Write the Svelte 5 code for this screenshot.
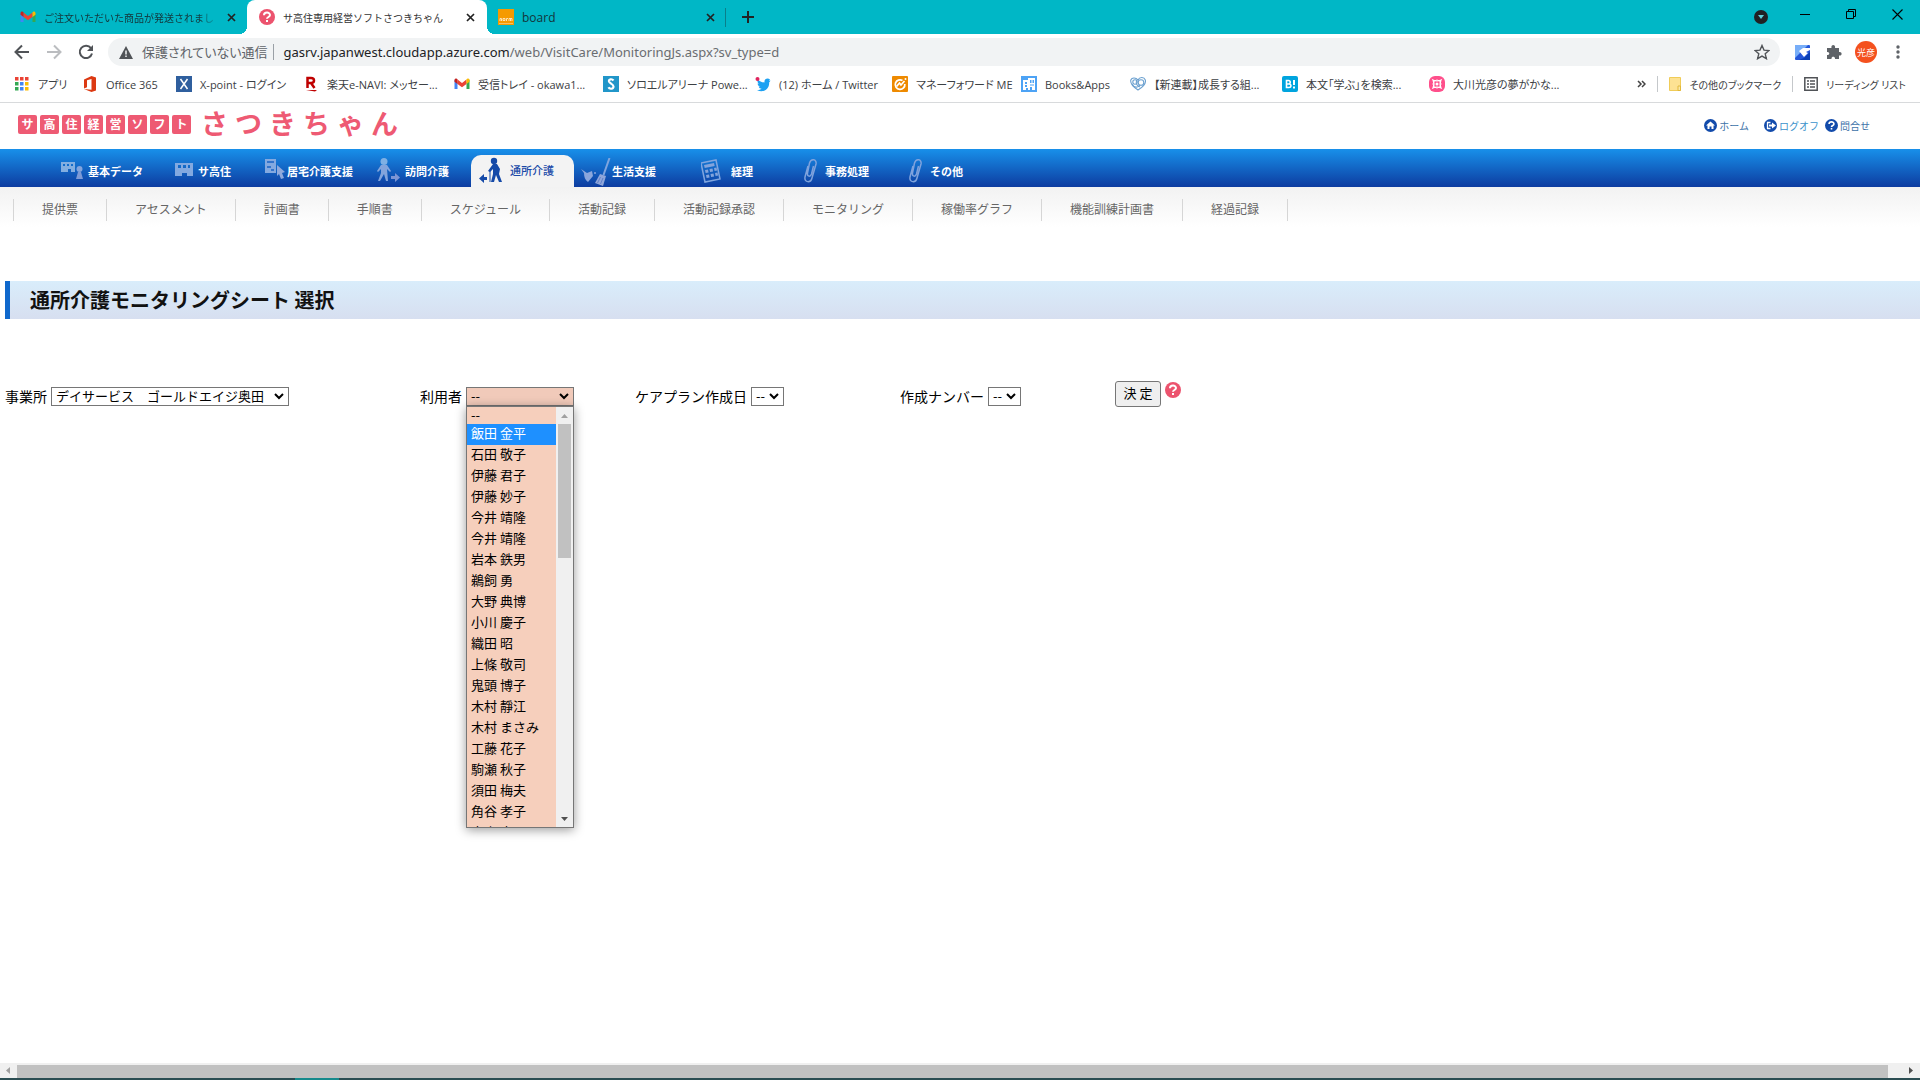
<script>
  const bookmarks = [
    { icon: 'apps', text: 'アプリ', w: 68 },
    { icon: 'office', text: 'Office 365', w: 94 },
    { icon: 'xpoint', text: 'X-point - ログイン', w: 127 },
    { icon: 'rakuten', text: '楽天e-NAVI: メッセー...', w: 151 },
    { icon: 'gmail', text: '受信トレイ - okawa1...', w: 149 },
    { icon: 'solo', text: 'ソロエルアリーナ Powe...', w: 152 },
    { icon: 'twitter', text: '(12) ホーム / Twitter', w: 137 },
    { icon: 'mf', text: 'マネーフォワード ME', w: 129 },
    { icon: 'books', text: 'Books&Apps', w: 109 },
    { icon: 'hearts', text: '【新連載】成長する組...', w: 152 },
    { icon: 'hatena', text: '本文「学ぶ」を検索...', w: 147 },
    { icon: 'pink', text: '大川光彦の夢がかな...', w: 150 }
  ];

  const nav = [
    { icon: 'data', text: '基本データ', w: 114, iw: 27 },
    { icon: 'building', text: 'サ高住', w: 90, iw: 23 },
    { icon: 'home', text: '居宅介護支援', w: 112, iw: 22 },
    { icon: 'visit', text: '訪問介護', w: 94, iw: 28 },
    { icon: 'day', text: '通所介護', w: 103, iw: 31, active: true },
    { icon: 'clean', text: '生活支援', w: 127, iw: 38 },
    { icon: 'calc', text: '経理', w: 103, iw: 30 },
    { icon: 'clip', text: '事務処理', w: 105, iw: 21 },
    { icon: 'clip', text: 'その他', w: 90, iw: 21 }
  ];

  const subnav = ['提供票', 'アセスメント', '計画書', '手順書', 'スケジュール', '活動記録', '活動記録承認', 'モニタリング', '稼働率グラフ', '機能訓練計画書', '経過記録'];

  const users = ['飯田 金平', '石田 敬子', '伊藤 君子', '伊藤 妙子', '今井 靖隆', '今井 靖隆', '岩本 鉄男', '鵜飼 勇', '大野 典博', '小川 慶子', '織田 昭', '上條 敬司', '鬼頭 博子', '木村 靜江', '木村 まさみ', '工藤 花子', '駒瀬 秋子', '須田 梅夫', '角谷 孝子', '高木 幸子'];

  let selected = $state('飯田 金平');
</script>

{#snippet gmail()}
  <svg width="16" height="16" viewBox="0 0 16 16" aria-hidden="true">
    <path d="M.5 3.500V13h3V6z" fill="#4285f4" />
    <path d="M15.500 3.500V13h-3V6z" fill="#34a853" />
    <path d="M3.500 3.600v4.400L8 11.200l4.500-3.200V3.600L8 7z" fill="#ea4335" />
    <path d="M.5 4.500C.5 2.500 2.500 2 3.500 3.200V8L.5 5.800z" fill="#c5221f" />
    <path d="M15.500 4.500c0-2-2-2.500-3-1.300V8l3-2.200z" fill="#fbbc04" />
  </svg>
{/snippet}

{#snippet question(size, color)}
  <svg width={size} height={size} viewBox="0 0 16 16" aria-hidden="true">
    <circle cx="8" cy="8" r="8" fill={color} />
    <path d="M5 6.200C5 2.700 11 2.700 11 6.100 11 8 8 8 8 9.800" fill="none" stroke="#fff" stroke-width="2" />
    <rect x="7" y="11" width="2" height="2" fill="#fff" />
  </svg>
{/snippet}

{#snippet cross()}
  <svg width="9" height="9" viewBox="0 0 9 9" aria-hidden="true"><path d="M1 1l7 7M8 1L1 8" stroke="#222" stroke-width="1.700" /></svg>
{/snippet}

{#snippet norma()}
  <svg width="16" height="16" viewBox="0 0 16 16" aria-hidden="true">
    <rect width="16" height="16" fill="#f59a00" />
    <path d="M2 12V9.500h1.500V12M5 9.500h2v2H5zM8.500 12V9.500H10M11 12V9.500h3V12M12.500 9.500V12" fill="none" stroke="#fde3b8" />
    <path d="M1 14.500h14" stroke="#fbd08a" stroke-width=".7" />
  </svg>
{/snippet}

{#snippet bmIcon(name)}
  {#if name === 'gmail'}
    {@render gmail()}
  {:else}
    <svg width="16" height="16" viewBox="0 0 16 16" aria-hidden="true">
      {#if name === 'apps'}
        {#each ['#ea4335', '#ea4335', '#ea4335', '#34a853', '#4285f4', '#fbbc04', '#34a853', '#4285f4', '#fbbc04'] as c, i}
          <rect x={1 + (i % 3) * 5} y={1 + Math.floor(i / 3) * 5} width="3.500" height="3.500" fill={c} />
        {/each}
      {:else if name === 'office'}
        <path d="M2 3.500L9.500 0 14 1.500v13L9.500 16 2 13l7.500.8V3L5 4.200v7L2 12.600z" fill="#dc3912" />
      {:else if name === 'xpoint'}
        <rect width="16" height="16" fill="#2f5f9e" />
        <path d="M4.500 3l7 10M11.500 3l-7 10" stroke="#fff" stroke-width="1.500" />
      {:else if name === 'rakuten'}
        <path d="M4.500 12V2H8c4 0 4 5 0 5H5M8 7l3.500 5" fill="none" stroke="#bf0000" stroke-width="2.500" />
        <path d="M3 14h11l-2 1.500z" fill="#bf0000" />
      {:else if name === 'solo'}
        <rect width="16" height="16" fill="#2196c9" />
        <path d="M10.500 4.500C9 2.500 5.500 3 6 5.500c.5 2 4.500 2.500 4.500 5 0 2.700-4 3-5 .8" fill="none" stroke="#fff" stroke-width="2.200" />
      {:else if name === 'twitter'}
        <path d="M15.500 4.500c-.5.300-1 .4-1.600.5.5-.4.900-.9 1.100-1.500-2.500-2-6-.5-5.500 3C6.800 6.400 4.500 5.300 3 3.500 1.900 5.400 2.700 7.100 4 8c-.5 0-1-.2-1.400-.4 0 1.500 1 2.800 2.500 3.200H3.700c.4 1.200 1.500 2 2.900 2-1.300 1-2.900 1.400-4.600 1.300 6 3.300 12.500-.5 12.200-7.900.5-.5 1-1 1.300-1.700z" fill="#1da1f2" />
        <circle cx="2.500" cy="3" r="2" fill="#e0245e" />
      {:else if name === 'mf'}
        <rect width="16" height="16" rx="1" fill="#ee8a00" />
        <path d="M10.500 4.500A4.800 4.800 0 1 0 12.800 8" fill="none" stroke="#fff" stroke-width="1.700" />
        <path d="M4.500 10.500l3-3.500 1.500 2 3.500-4" fill="none" stroke="#fff" stroke-width="1.700" />
        <circle cx="13.500" cy="3" r="1" fill="#fff" />
      {:else if name === 'books'}
        <path d="M0 0h16v16H0z" fill="#4da3f5" />
        <path d="M2 14V4h5V2h7v12h-3v-3H9v3H7v-2H5v2z" fill="#fff" />
        <path d="M4 6h2v2H4zM4 9h2v2H4zM9 4h1.500v3H9zM11.500 4H13v3h-1.500zM9 8.500h4v1H9z" fill="#4da3f5" />
      {:else if name === 'hearts'}
        <g fill="none" stroke="#6ba0cf" stroke-width="1.100">
          <path d="M8 14C3 11 0 8 .8 4 2 1 6 1.500 8 4c1.500-3 6-3.500 7.300 0 1 4-2 7-7.300 10z" />
          <circle cx="5" cy="6" r="2.200" /><circle cx="11" cy="6.500" r="2.800" /><path d="M2 8c2 4 6 4 8 1M7 4c-2 3 0 6 3 7" />
        </g>
      {:else if name === 'hatena'}
        <rect width="16" height="16" rx="2" fill="#00a4de" />
        <path d="M4.500 4.500v7h2.300c2.800 0 2.800-3.500.2-3.500H4.500h2c2.300 0 2.300-3.500 0-3.500z" fill="none" stroke="#fff" stroke-width="1.600" />
        <path d="M12 4v5M12 10.500v2" stroke="#fff" stroke-width="2" />
      {:else if name === 'pink'}
        <rect width="16" height="16" rx="6" fill="#ff4f8b" />
        <path d="M4 4q4 2 8 0-2 4 0 8-4-2-8 0 2-4 0-8z" fill="none" stroke="#fff" stroke-width="1.200" />
        <circle cx="8" cy="8" r="4" fill="none" stroke="#fff" />
        <circle cx="8" cy="8" r="1.500" fill="#fff" />
      {/if}
    </svg>
  {/if}
{/snippet}

{#snippet navIcon(name, w)}
  <svg class="nav-icon" width={w} height="28" viewBox="0 0 {w} 28" aria-hidden="true">
    {#if name === 'data'}
      <path d="M0 4h14v10h-4v-3H7v3H0zM2 6v2h2V6zm4 0v2h2V6zm4 0v2h2V6z" fill="#83aee0" fill-rule="evenodd" />
      <circle cx="18.500" cy="11" r="3" fill="#83a4dc" /><path d="M17 14h3l2 7h-7z" fill="#7d9ad6" />
    {:else if name === 'building'}
      <path d="M0 5h18v13h-6v-3H7v3H0zM3 7v3h3V7zm5 0v3h3V7zm5 0v3h2V7z" fill="#83a9e0" fill-rule="evenodd" />
    {:else if name === 'home'}
      <path d="M0 1h11v14H0z" fill="#83a9e0" /><path d="M2 4h7M2 9h4M6 12h3" stroke="#1a63c4" stroke-width="1.500" />
      <path d="M12 7l8 7-3 1 2 5-3 1-2-5-2 2z" fill="#8fa9dc" />
    {:else if name === 'visit'}
      <circle cx="7" cy="3.500" r="3.500" fill="#7fb0e4" />
      <path d="M4 7h6l4 6-1 1-3-3 1 12H9L7 16l-4 7H1l3-8V11l-3 3-1-1z" fill="#83a4dc" />
      <path d="M14 18h4v-3l5 4.500-5 4.500v-3h-4z" fill="#7d95d4" />
    {:else if name === 'day'}
      <circle cx="15" cy="4" r="3.200" fill="#154aa8" />
      <path d="M14 7h4l3 5-1 5 3 8h-3l-3-7-2 7h-3l2-8v-5l-3 3-2-1z" fill="#154aa8" />
      <path d="M11 14v11" stroke="#154aa8" /><path d="M8 20H5v-3l-5 4.500 5 4.500v-3h3z" fill="#154aa8" />
    {:else if name === 'clean'}
      <g transform="translate(7 0)">
        <path d="M0 11l6 4 5-2 1 5-5 6c-3-2-4-5-4-9z" fill="#8aa6dc" /><path d="M28.500 0l-6 17" stroke="#7fa5df" stroke-width="2" />
        <path d="M19 16l6 2-3 10-8-3z" fill="#8fa6da" /><path d="M16.500 25l3-6M19.500 26l2.500-6" stroke="#5f80cb" /><circle cx="14" cy="15" r="1" fill="#8aa6dc" />
      </g>
    {:else if name === 'calc'}
      <path d="M0 5L15 2l4 19-15 3z" fill="none" stroke="#7fa5df" stroke-width="1.500" />
      <path d="M3 7l10-2 .7 3-10 2zM4 12l3-.6.6 3-3 .6zM8.500 11l3-.6.6 3-3 .6zM13 10l2.500-.5.6 3-2.500.5zM5 17l3-.6.6 3-3 .6zM9.500 16l3-.6.6 3-3 .6zM14 15l2.500-.5.6 3-2.500.5z" fill="#83a4dc" />
    {:else}
      <path d="M4 8L1 19c-1 6 6 6 7 1l4-14c1-5-5-6-6.500-1L3.500 15c-.5 4 3 4 4 1L9.500 8" fill="none" stroke="#7fa3dd" stroke-width="1.500" />
    {/if}
  </svg>
{/snippet}

<div class="window">
  <header class="chrome">
    <div class="tabs">
      <button class="tab first">{@render gmail()}<span class="title fade">ご注文いただいた商品が発送されまし</span>{@render cross()}</button>
      <button class="tab active">{@render question(16, '#ec536e')}<span class="title">サ高住専用経営ソフトさつきちゃん</span>{@render cross()}</button>
      <button class="tab last">{@render norma()}<span class="title latin">board</span>{@render cross()}</button>
      <button class="icon-btn new" aria-label="新しいタブ"><svg width="12" height="12" viewBox="0 0 12 12"><path d="M6 0v12M0 6h12" stroke="#222" stroke-width="2" /></svg></button>
      <div class="controls">
        <button class="icon-btn" aria-label="タブを検索"><svg width="14" height="14" viewBox="0 0 14 14"><circle cx="7" cy="7" r="7" fill="#202124" /><path d="M4 5h6l-3 4z" fill="#5fd0da" /></svg></button>
        <button class="icon-btn high" aria-label="最小化"><svg width="10" height="10" viewBox="0 0 10 10"><path d="M0 5.500h10" stroke="#000" /></svg></button>
        <button class="icon-btn high" aria-label="元に戻す"><svg width="10" height="10" viewBox="0 0 10 10"><path d="M.5 2.500h7v7h-7zM2.500 2.500v-2h7v7h-2" fill="none" stroke="#000" /></svg></button>
        <button class="icon-btn high" aria-label="閉じる"><svg width="11" height="11" viewBox="0 0 11 11"><path d="M.5.5l10 10M10.500.5l-10 10" stroke="#000" stroke-width="1.100" /></svg></button>
      </div>
    </div>

    <div class="toolbar">
      <button class="icon-btn" aria-label="戻る"><svg width="16" height="16" viewBox="0 0 16 16"><path d="M15 8H2M8 1.500L1.500 8 8 14.500" fill="none" stroke="#505357" stroke-width="2" /></svg></button>
      <button class="icon-btn" aria-label="進む"><svg width="16" height="16" viewBox="0 0 16 16"><path d="M1 8h13M8 1.500L14.500 8 8 14.500" fill="none" stroke="#bbbdc0" stroke-width="2" /></svg></button>
      <button class="icon-btn" aria-label="再読み込み"><svg width="16" height="16" viewBox="0 0 16 16"><path d="M13 4.200A6.200 6.200 0 1 0 14 9.500" fill="none" stroke="#505357" stroke-width="2" /><path d="M15 1v6H9z" fill="#505357" /></svg></button>
      <div class="omnibox">
        <svg width="14" height="13" viewBox="0 0 14 13" aria-hidden="true"><path d="M7 0l7 13H0z" fill="#505357" /><path d="M7 4.500v4M7 9.500v1.500" stroke="#f1f3f4" stroke-width="1.500" /></svg>
        <span class="insecure">保護されていない通信</span>
        <span class="url"><b>gasrv.japanwest.cloudapp.azure.com</b>/web/VisitCare/MonitoringJs.aspx?sv_type=d</span>
        <button class="icon-btn star" aria-label="ブックマークに追加"><svg width="16" height="16" viewBox="0 0 16 16"><path d="M8 1.500l2 4.600 5 .4-3.800 3.300 1.200 4.900L8 12.100l-4.400 2.600 1.200-4.900L1 6.500l5-.4z" fill="none" stroke="#505357" stroke-width="1.400" /></svg></button>
      </div>
      <div class="ext">
        <svg width="15" height="15" viewBox="0 0 15 15" aria-hidden="true"><rect width="15" height="15" rx="1" fill="#2456d8" /><path d="M0 13V0h13z" fill="#78aef8" /><path d="M4 6l4-3h7v2l-4 2 2 1-4 4z" fill="#fff" /><path d="M9 13l6-6v8H4z" fill="#0c3fb5" /></svg>
        <svg width="16" height="16" viewBox="0 0 16 16" aria-hidden="true"><path d="M1 4h4.500c-1-4 4.500-4 3.500 0H13v4c3.500-1 3.500 4.500 0 3.500V15H9c.5-3-4-3-3.500 0H1v-4c3 .5 3-3.500 0-3z" fill="#5f6368" /></svg>
        <span class="avatar">光彦</span>
        <svg width="4" height="14" viewBox="0 0 4 14" aria-hidden="true"><circle cx="2" cy="2" r="1.700" fill="#5f6368" /><circle cx="2" cy="7" r="1.700" fill="#5f6368" /><circle cx="2" cy="12" r="1.700" fill="#5f6368" /></svg>
      </div>
    </div>

    <div class="bookmarks">
      {#each bookmarks as b}
        <a href="#bookmark" style:width="{b.w}px">{@render bmIcon(b.icon)}<span>{b.text}</span></a>
      {/each}
      <div class="bm-right">
        <svg width="9" height="8" viewBox="0 0 9 8" aria-hidden="true"><path d="M1 1l3 3-3 3M5 1l3 3-3 3" fill="none" stroke="#444" stroke-width="1.500" /></svg>
        <i></i>
        <a href="#others"><svg width="12" height="14" viewBox="0 0 12 14" aria-hidden="true"><path d="M.5.500h11v13H.5z" fill="#fde293" stroke="#f0cc58" /><path d="M9 9h2.500v4.500H9z" fill="#fbe9a8" stroke="#e2b93b" /></svg><span>その他のブックマーク</span></a>
        <i></i>
        <a href="#reading"><svg width="14" height="14" viewBox="0 0 14 14" aria-hidden="true"><path d="M.8.8h12.400v12.400H.8z" fill="none" stroke="#505357" stroke-width="1.500" /><path d="M3 4h2m1 0h5M3 7h2m1 0h5M3 10h2m1 0h5" stroke="#505357" stroke-width="1.500" /></svg><span>リーディング リスト</span></a>
      </div>
    </div>
  </header>

  <div class="brand">
    <div class="logo">
      {#each 'サ高住経営ソフト' as ch}<span class="tile">{ch}</span>{/each}
      <div class="name">{#each 'さつきちゃん' as ch}<span>{ch}</span>{/each}</div>
    </div>
    <div class="links">
      <a href="#home" class="wide"><svg width="13" height="13" viewBox="0 0 13 13" aria-hidden="true"><circle cx="6.500" cy="6.500" r="6.500" fill="#124bab" /><path d="M6.500 2.500l4.500 4H9.500v3.500h-2V7.500h-2V10h-2V6.500H2z" fill="#fff" /></svg>ホーム</a>
      <a href="#logoff" class="light"><svg width="13" height="13" viewBox="0 0 13 13" aria-hidden="true"><circle cx="6.500" cy="6.500" r="6.500" fill="#124bab" /><path d="M6.500 3.500H3.500v6h3" fill="none" stroke="#fff" stroke-width="1.300" /><path d="M5 5.500h3v-2l4 3-4 3v-2H5z" fill="#fff" /></svg>ログオフ</a>
      <a href="#contact">{@render question(13, '#124bab')}問合せ</a>
    </div>
  </div>

  <nav class="main-nav">
    {#each nav as n}
      <a href="#nav" class:active={n.active} style:width="{n.w}px">{@render navIcon(n.icon, n.iw)}<span>{n.text}</span></a>
    {/each}
  </nav>

  <nav class="sub-nav">
    {#each subnav as s}<a href="#sub">{s}</a>{/each}
  </nav>

  <main>
    <h1>通所介護モニタリングシート 選択</h1>
    <form class="filters" onsubmit={(e) => e.preventDefault()}>
      <div class="field">
        <label for="office">事業所</label>
        <select id="office" class="office"><option>デイサービス　ゴールドエイジ奥田</option></select>
      </div>
      <div class="field">
        <label for="user">利用者</label>
        <div class="combo">
          <select id="user" class="user"><option>--</option></select>
          <div class="popup">
            <ul>
              <li class="blank">--</li>
              {#each users as u}
                <li class:hl={u === selected}>{u}</li>
              {/each}
            </ul>
            <div class="vbar">
              <svg width="7" height="4" viewBox="0 0 7 4" aria-hidden="true"><path d="M3.500 0L7 4H0z" fill="#a0a0a0" /></svg>
              <div class="vthumb"></div>
              <svg class="down" width="7" height="4" viewBox="0 0 7 4" aria-hidden="true"><path d="M0 0h7L3.500 4z" fill="#505050" /></svg>
            </div>
          </div>
        </div>
      </div>
      <div class="field">
        <label for="plan">ケアプラン作成日</label>
        <select id="plan" class="short"><option>--</option></select>
      </div>
      <div class="field">
        <label for="num">作成ナンバー</label>
        <select id="num" class="short"><option>--</option></select>
      </div>
      <div class="field submit">
        <button class="go">決 定</button>
        {@render question(16, '#ec536e')}
      </div>
    </form>
  </main>

  <div class="hbar">
    <svg width="4" height="7" viewBox="0 0 4 7" aria-hidden="true"><path d="M4 0v7L0 3.500z" fill="#a0a0a0" /></svg>
    <div class="hthumb"></div>
    <svg width="4" height="7" viewBox="0 0 4 7" aria-hidden="true"><path d="M0 0v7l4-3.500z" fill="#505050" /></svg>
  </div>
  <div class="taskbar"><span></span></div>
</div>

<style>
  :global(body) { margin: 0; background: #fff; }
  .window {
    display: flex;
    flex-direction: column;
    min-height: 100vh;
    overflow: hidden;
    font-family: "Noto Sans CJK JP", "Noto Sans", sans-serif;
    color: #000;
  }
  .window, .window * { box-sizing: border-box; }
  a { color: inherit; text-decoration: none; white-space: nowrap; }
  svg { display: block; flex: none; }
  button { font-family: inherit; }

  .chrome { font-family: "Open Sans", "Noto Sans CJK JP", sans-serif; font-feature-settings: "palt"; border-bottom: 1px solid #d8dadc; }
  .tabs { display: flex; height: 34px; background: #00b7c6; }
  .tab {
    display: flex;
    align-items: center;
    gap: 8px;
    width: 240px;
    padding: 0 12px;
    border: 0;
    background: none;
    font-size: 10px;
    color: #14353a;
    text-align: left;
  }
  .tab.first { width: 247px; padding: 0 11px 0 20px; }
  .tab.last { width: 239px; padding: 0 11px; position: relative; }
  .tab.last::after { content: ""; position: absolute; right: 0; top: 8px; width: 1px; height: 19px; background: #0a7f8a; }
  .tab.active { position: relative; background: #fff; color: #333; border-radius: 8px 8px 0 0; }
  .tab.active::before, .tab.active::after { content: ""; position: absolute; bottom: 0; width: 8px; height: 8px; }
  .tab.active::before { left: -8px; background: radial-gradient(circle at 0 0, transparent 8px, #fff 8px); }
  .tab.active::after { right: -8px; background: radial-gradient(circle at 100% 0, transparent 8px, #fff 8px); }
  .title { flex: 1; min-width: 0; overflow: hidden; white-space: nowrap; }
  .title.latin { font-size: 12px; }
  .fade { mask-image: linear-gradient(to right, #000 88%, transparent); }
  .icon-btn { display: flex; align-items: center; justify-content: center; padding: 0; border: 0; background: none; }
  .new { width: 44px; height: 34px; }
  .controls { display: flex; margin-left: auto; }
  .controls .icon-btn { width: 46px; height: 34px; }
  .controls .icon-btn:first-child { width: 32px; margin-right: 5px; }
  .controls .high { height: 28px; }

  .toolbar { display: flex; align-items: center; height: 36px; padding: 0 6px; }
  .toolbar > .icon-btn { width: 32px; height: 28px; }
  .omnibox { display: flex; flex: 1; align-items: center; height: 28px; margin-left: 6px; padding: 0 10px 0 11px; background: #f1f3f4; border-radius: 14px; white-space: nowrap; }
  .insecure { margin-left: 9px; padding-right: 6px; border-right: 1px solid #9aa0a6; font-size: 13px; line-height: 16px; color: #5f6368; }
  .url { flex: 1; margin-left: 9px; font-family: "Noto Sans", sans-serif; font-size: 13px; color: #6a6d71; }
  .url b { font-weight: 400; color: #202124; }
  .ext { display: grid; grid-template-columns: repeat(4, 32px); place-items: center; margin-left: 6px; }
  .avatar { display: grid; place-items: center; width: 22px; height: 22px; border-radius: 50%; background: #f4511e; color: #fff; font-size: 9px; }

  .bookmarks { display: flex; align-items: center; height: 32px; padding: 0 14px 4px; font-size: 11px; color: #3c4043; }
  .bookmarks a { display: flex; flex: none; align-items: center; gap: 8px; }
  .bm-right { display: flex; align-items: center; gap: 11px; margin-left: auto; font-size: 10px; }
  .bm-right i { width: 1px; height: 16px; background: #c5c8cb; }

  .brand { display: flex; justify-content: space-between; height: 46px; padding: 0 50px 0 18px; }
  .logo { display: flex; gap: 3px; height: 43px; align-items: center; color: #ee5a73; }
  .tile { width: 19px; height: 19px; border-radius: 2px; background: #ee5a73; color: #fff; font-size: 12px; font-weight: 700; line-height: 18px; text-align: center; }
  .name { display: flex; gap: 7px; margin-left: 7px; padding-bottom: 3px; font-size: 27px; font-weight: 700; line-height: 40px; }
  .links { display: flex; align-items: center; gap: 6px; height: 45px; font-size: 10px; color: #3d72a8; }
  .links a { display: flex; align-items: center; gap: 2px; }
  .links .wide { margin-right: 9px; }
  .links .light { color: #3b92cb; }

  .main-nav { display: flex; align-items: flex-end; height: 38px; padding-left: 61px; background: linear-gradient(#1890ea, #0d3ca0); color: #fff; font-size: 11px; font-weight: 700; }
  .main-nav a { display: flex; flex: none; align-items: center; height: 31px; }
  .main-nav span { padding-bottom: 2px; }
  .main-nav .active { height: 32px; padding-left: 8px; border-radius: 10px 10px 0 0; background: #f3f3f3; color: #1a4aa8; font-weight: 500; }

  .sub-nav { display: flex; height: 40px; padding: 12px 0 6px 13px; background: linear-gradient(#f2f2f2, #fff); color: #666; font-size: 12px; line-height: 20px; }
  .sub-nav a { padding: 0 28px 2px; border-left: 1px solid #d6d6d6; }
  .sub-nav a:last-child { border-right: 1px solid #d6d6d6; }

  main { flex: 1; padding: 54px 0 0 5px; }
  h1 { margin: 0; height: 38px; padding-left: 20px; border-left: 5px solid #1068cc; background: linear-gradient(#d9edfb, #d7dff0); color: #111; font-size: 20px; font-weight: 700; line-height: 37px; }
  .filters { display: grid; grid-template-columns: 415px 215px 265px 215px auto; align-items: start; margin-top: 62px; }
  .field { display: flex; align-items: center; gap: 4px; height: 30px; font-size: 14px; white-space: nowrap; }
  .field.submit { height: 26px; align-items: flex-start; }
  .field.submit svg { margin-top: 1px; }
  select {
    height: 19px;
    margin: 0;
    padding: 0 0 2px 4px;
    appearance: none;
    border: 1px solid #767676;
    border-radius: 0;
    background: url("data:image/svg+xml,%3Csvg xmlns='http://www.w3.org/2000/svg' width='10' height='7'%3E%3Cpath d='M1 1l4 4 4-4' fill='none' stroke='%23000' stroke-width='2'/%3E%3C/svg%3E") no-repeat right 4px center;
    color: #000;
    font-family: inherit;
    font-size: 13px;
    line-height: 15px;
  }
  .office { width: 238px; }
  .user { display: block; width: 108px; background-color: #f1caba; }
  .short { width: 33px; }
  .combo { position: relative; }
  .popup { position: absolute; top: 100%; left: 0; z-index: 2; display: flex; width: 108px; height: 422px; border: 1px solid #767676; background: #f6cfbc; box-shadow: 0 2px 10px rgba(0, 0, 0, .4); }
  .popup ul { flex: 1; margin: 0; padding: 0; overflow: hidden; list-style: none; font-size: 13px; }
  .popup li { height: 21px; padding-left: 4px; line-height: 17px; }
  .popup .blank { height: 17px; line-height: 15px; }
  .popup .hl { background: #1e90ff; color: #fff; }
  .vbar { display: flex; flex-direction: column; align-items: center; width: 17px; padding: 7px 0 6px; background: #f0f0f0; }
  .vthumb { width: 13px; height: 134px; margin-top: 6px; background: #c1c1c1; }
  .down { margin-top: auto; }
  .go { width: 46px; height: 26px; padding: 0 0 3px; border: 1px solid #767676; border-radius: 3px; background: #efefef; color: #000; font-size: 13px; }

  .hbar { display: flex; align-items: center; gap: 7px; height: 15px; padding: 0 7px 0 6px; background: #f0f0f0; }
  .hthumb { flex: 1; height: 13px; margin-top: 2px; margin-right: 14px; background: #c1c1c1; }
  .taskbar { height: 2px; padding-left: 295px; background: #2b4d52; }
  .taskbar span { display: block; width: 44px; height: 2px; background: #168a8c; }
</style>
